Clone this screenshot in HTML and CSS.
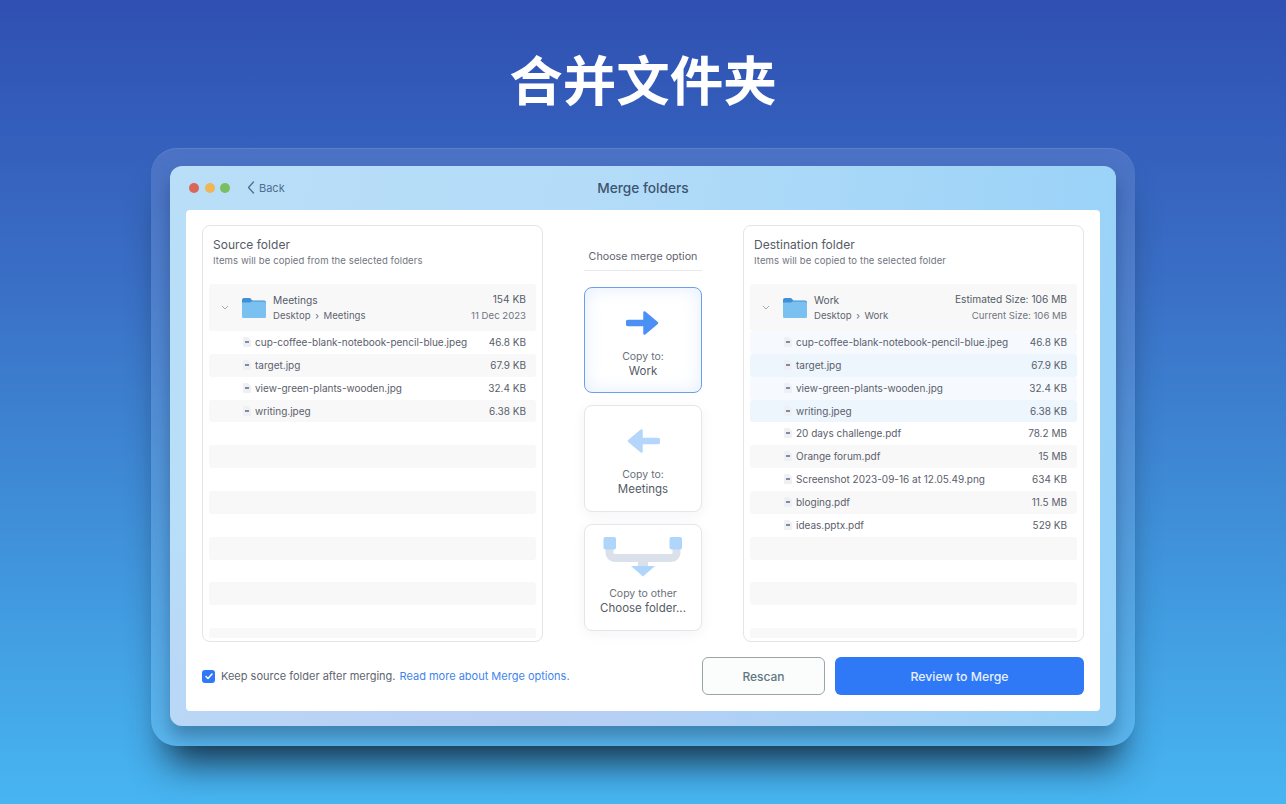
FILE: index.html
```html
<!DOCTYPE html>
<html lang="zh">
<head>
    <meta charset="UTF-8">
    <meta name="viewport" content="width=device-width, initial-scale=1.0">
    <title>合并文件夹</title>
    <link rel="stylesheet" href="styles.css">
</head>
<body>
    <svg class="defs" width="0" height="0">
        <symbol id="folder" viewBox="0 0 24 22">
            <path d="M0 3a2 2 0 0 1 2-2h6l2.500 2.500H22a2 2 0 0 1 2 2V8H0z" fill="#3f90d4"/>
            <path d="M0 5.500h8l1.500-1H22a2 2 0 0 1 2 2V19a2 2 0 0 1-2 2H2a2 2 0 0 1-2-2z" fill="#7ac0f0"/>
            <path d="M0 19.500V19a2 2 0 0 0 2 2h20a2 2 0 0 0 2-2v.5a1.500 1.500 0 0 1-1.500 1.500h-21A1.500 1.500 0 0 1 0 19.500z" fill="#4f9fd8"/>
        </symbol>
        <symbol id="file" viewBox="0 0 8 10">
            <path d="M0 1a1 1 0 0 1 1-1h4l3 3v6a1 1 0 0 1-1 1H1a1 1 0 0 1-1-1z" fill="#eef0f4"/>
            <rect x="2" y="4.200" width="4" height="1.600" fill="#6a7090"/>
        </symbol>
    </svg>

    <h1 class="headline">合并文件夹</h1>

    <div class="frame">
        <div class="window">
            <div class="titlebar">
                <div class="titlebar-left">
                    <div class="lights">
                        <span class="light red"></span>
                        <span class="light yellow"></span>
                        <span class="light green"></span>
                    </div>
                    <a class="back">
                        <svg width="8" height="13" viewBox="0 0 8 13"><path d="M6.500 1 1.500 6.500l5 5.500" fill="none" stroke="#4f6f92" stroke-width="1.300" stroke-linecap="round" stroke-linejoin="round"/></svg>
                        Back
                    </a>
                </div>
                <div class="window-title">Merge folders</div>
            </div>

            <div class="content">
                <div class="columns">
                    <section class="panel">
                        <h2>Source folder</h2>
                        <p class="panel-sub">Items will be copied from the selected folders</p>
                        <div class="list">
                            <div class="folder-row">
                                <svg class="chevron" width="8" height="5" viewBox="0 0 8 5"><path d="M1 1l3 3 3-3" fill="none" stroke="#a4a9b2" stroke-width="1"/></svg>
                                <svg class="folder-icon" width="24" height="22"><use href="#folder"/></svg>
                                <div class="folder-info">
                                    <div class="folder-name">Meetings</div>
                                    <div class="folder-path">Desktop <i>›</i> Meetings</div>
                                </div>
                                <div class="folder-meta">
                                    <div class="meta-main">154 KB</div>
                                    <div class="meta-sub">11 Dec 2023</div>
                                </div>
                            </div>
                            <div class="file-row"><svg width="8" height="10"><use href="#file"/></svg><span class="file-name">cup-coffee-blank-notebook-pencil-blue.jpeg</span><span class="file-size">46.8 KB</span></div>
                            <div class="file-row shade"><svg width="8" height="10"><use href="#file"/></svg><span class="file-name">target.jpg</span><span class="file-size">67.9 KB</span></div>
                            <div class="file-row"><svg width="8" height="10"><use href="#file"/></svg><span class="file-name">view-green-plants-wooden.jpg</span><span class="file-size">32.4 KB</span></div>
                            <div class="file-row shade"><svg width="8" height="10"><use href="#file"/></svg><span class="file-name">writing.jpeg</span><span class="file-size">6.38 KB</span></div>
                            <div class="file-row"></div>
                            <div class="file-row shade"></div>
                            <div class="file-row"></div>
                            <div class="file-row shade"></div>
                            <div class="file-row"></div>
                            <div class="file-row shade"></div>
                            <div class="file-row"></div>
                            <div class="file-row shade"></div>
                            <div class="file-row"></div>
                            <div class="file-row shade"></div>
                        </div>
                    </section>

                    <div class="options">
                        <div class="options-title">Choose merge option</div>
                        <div class="option selected">
                            <svg width="34" height="26" viewBox="0 0 34 26"><path d="M2.500 13h16" stroke="#4a90f5" stroke-width="6.500" stroke-linecap="round"/><path d="M18.500 2.500 31 13 18.500 23.500z" fill="#4a90f5" stroke="#4a90f5" stroke-width="2.500" stroke-linejoin="round"/></svg>
                            <div class="option-label">Copy to:</div>
                            <div class="option-name">Work</div>
                        </div>
                        <div class="option">
                            <svg width="34" height="26" viewBox="0 0 34 26"><path d="M31.500 13h-16" stroke="#b5d6fb" stroke-width="6.500" stroke-linecap="round"/><path d="M15.500 2.500 3 13l12.500 10.500z" fill="#b5d6fb" stroke="#b5d6fb" stroke-width="2.500" stroke-linejoin="round"/></svg>
                            <div class="option-label">Copy to:</div>
                            <div class="option-name">Meetings</div>
                        </div>
                        <div class="option other">
                            <svg width="80" height="40" viewBox="0 0 80 40"><path d="M6.500 12v4a5 5 0 0 0 5 5h57a5 5 0 0 0 5-5v-4" fill="none" stroke="#dbe1ea" stroke-width="8"/><path d="M40 25v5" stroke="#dbe1ea" stroke-width="10"/><rect x="0.500" y="0" width="12.500" height="12.500" rx="2" fill="#b0d5fb"/><rect x="66.500" y="0" width="12.500" height="12.500" rx="2" fill="#b0d5fb"/><path d="M28 29h24L40 39.500z" fill="#b0d5fb"/></svg>
                            <div class="option-label">Copy to other</div>
                            <div class="option-name">Choose folder...</div>
                        </div>
                    </div>

                    <section class="panel">
                        <h2>Destination folder</h2>
                        <p class="panel-sub">Items will be copied to the selected folder</p>
                        <div class="list">
                            <div class="folder-row">
                                <svg class="chevron" width="8" height="5" viewBox="0 0 8 5"><path d="M1 1l3 3 3-3" fill="none" stroke="#a4a9b2" stroke-width="1"/></svg>
                                <svg class="folder-icon" width="24" height="22"><use href="#folder"/></svg>
                                <div class="folder-info">
                                    <div class="folder-name">Work</div>
                                    <div class="folder-path">Desktop <i>›</i> Work</div>
                                </div>
                                <div class="folder-meta">
                                    <div class="meta-main">Estimated Size: 106 MB</div>
                                    <div class="meta-sub">Current Size: 106 MB</div>
                                </div>
                            </div>
                            <div class="file-row tint-1"><svg width="8" height="10"><use href="#file"/></svg><span class="file-name">cup-coffee-blank-notebook-pencil-blue.jpeg</span><span class="file-size">46.8 KB</span></div>
                            <div class="file-row tint-2"><svg width="8" height="10"><use href="#file"/></svg><span class="file-name">target.jpg</span><span class="file-size">67.9 KB</span></div>
                            <div class="file-row tint-1"><svg width="8" height="10"><use href="#file"/></svg><span class="file-name">view-green-plants-wooden.jpg</span><span class="file-size">32.4 KB</span></div>
                            <div class="file-row tint-2"><svg width="8" height="10"><use href="#file"/></svg><span class="file-name">writing.jpeg</span><span class="file-size">6.38 KB</span></div>
                            <div class="file-row"><svg width="8" height="10"><use href="#file"/></svg><span class="file-name">20 days challenge.pdf</span><span class="file-size">78.2 MB</span></div>
                            <div class="file-row shade"><svg width="8" height="10"><use href="#file"/></svg><span class="file-name">Orange forum.pdf</span><span class="file-size">15 MB</span></div>
                            <div class="file-row"><svg width="8" height="10"><use href="#file"/></svg><span class="file-name">Screenshot 2023-09-16 at 12.05.49.png</span><span class="file-size">634 KB</span></div>
                            <div class="file-row shade"><svg width="8" height="10"><use href="#file"/></svg><span class="file-name">bloging.pdf</span><span class="file-size">11.5 MB</span></div>
                            <div class="file-row"><svg width="8" height="10"><use href="#file"/></svg><span class="file-name">ideas.pptx.pdf</span><span class="file-size">529 KB</span></div>
                            <div class="file-row shade"></div>
                            <div class="file-row"></div>
                            <div class="file-row shade"></div>
                            <div class="file-row"></div>
                            <div class="file-row shade"></div>
                        </div>
                    </section>
                </div>

                <div class="footer">
                    <label class="keep">
                        <span class="checkbox"><svg width="8" height="7" viewBox="0 0 8 7"><path d="M1 3.500 3 5.500 7 1" fill="none" stroke="#fff" stroke-width="1.500" stroke-linecap="round" stroke-linejoin="round"/></svg></span>
                        Keep source folder after merging.
                        <a class="more">Read more about Merge options.</a>
                    </label>
                    <button class="btn-rescan">Rescan</button>
                    <button class="btn-review">Review to Merge</button>
                </div>
            </div>
        </div>
    </div>
</body>
</html>
```

FILE: styles.css
```css
* {
    margin: 0;
    padding: 0;
    box-sizing: border-box;
    font-family: Inter, "Noto Sans CJK SC", sans-serif;
}

body {
    width: 1286px;
    height: 804px;
    overflow: hidden;
    background: linear-gradient(180deg, #2f50b2 0%, #3a6fc6 35%, #3f8fd8 65%, #47b5f1 100%);
}

.defs {
    position: absolute;
}

.headline {
    height: 148px;
    padding-top: 44px;
    text-align: center;
    color: white;
    font-size: 53.500px;
    line-height: 68px;
    font-weight: 700;
    font-family: "Noto Sans CJK SC", sans-serif;
}

.frame {
    width: 984px;
    height: 598px;
    margin-left: 151px;
    padding: 18px 19px;
    border-radius: 26px;
    background: rgba(255, 255, 255, 0.11);
    box-shadow: 0 32px 36px -16px rgba(20, 45, 65, 0.95), inset 0 1px 0 rgba(255, 255, 255, 0.1);
}

.window {
    height: 560px;
    padding: 0 16px 15px;
    border-radius: 12px;
    background:
        radial-gradient(600px 220px at 36% 100%, rgba(190, 195, 240, 0.55), transparent),
        linear-gradient(100deg, #b9def8 0%, #b4dcf8 40%, #97d1f8 100%);
    box-shadow: 0 12px 18px rgba(10, 40, 70, 0.35);
}

.titlebar {
    height: 44px;
    display: grid;
    grid-template-columns: 1fr auto 1fr;
    align-items: center;
}

.titlebar-left {
    display: flex;
    align-items: center;
    padding-left: 3px;
}

.lights {
    display: flex;
    gap: 5.500px;
    margin-right: 17px;
}

.light {
    width: 10px;
    height: 10px;
    border-radius: 50%;
}

.red { background: #da665a; }
.yellow { background: #eeb654; }
.green { background: #7abf5f; }

.back {
    display: flex;
    align-items: center;
    gap: 4px;
    margin-top: -1px;
    font-size: 11px;
    color: #4f6f92;
}

.window-title {
    font-size: 13.700px;
    font-weight: 500;
    color: #3d5570;
}

.content {
    height: 501px;
    padding: 15px 16px;
    background: white;
    border-radius: 4px;
}

.columns {
    display: grid;
    grid-template-columns: 341px 1fr 341px;
    height: 417px;
}

.panel {
    padding: 12px 6px 4px;
    border: 1px solid #e2e4e8;
    border-radius: 8px;
    overflow: hidden;
}

.panel h2 {
    padding-left: 4px;
    font-size: 12px;
    line-height: 13px;
    font-weight: 400;
    letter-spacing: 0.03px;
    color: #555b66;
}

.panel-sub {
    padding-left: 4px;
    margin-top: 3px;
    font-size: 9.500px;
    line-height: 13px;
    letter-spacing: 0.11px;
    color: #70757f;
}

.list {
    margin-top: 17px;
    height: 354px;
    overflow: hidden;
}

.folder-row {
    height: 47px;
    display: flex;
    align-items: center;
    padding-right: 10px;
    background: #f8f8f9;
    border-radius: 3px;
}

.chevron {
    margin-left: 12px;
}

.folder-icon {
    margin-left: 13px;
    margin-right: 7px;
}

.folder-info {
    flex: 1;
}

.folder-name {
    font-size: 10.200px;
    line-height: 15px;
    color: #555b66;
}

.folder-path {
    font-size: 9.600px;
    line-height: 15px;
    color: #5f6570;
}

.folder-path i {
    font-style: normal;
    margin: 0 2px;
}

.folder-meta {
    text-align: right;
}

.meta-main {
    font-size: 10.200px;
    line-height: 15px;
    color: #555b66;
}

.meta-sub {
    font-size: 9.600px;
    line-height: 17px;
    color: #70757f;
}

.file-row {
    height: 22.860px;
    display: flex;
    align-items: center;
    padding: 0 10px 1px 34px;
    font-size: 10px;
    color: #5a606b;
    border-radius: 3px;
}

.file-row.shade { background: #f8f8f9; }
.file-row.tint-1 { background: #f6fafe; }
.file-row.tint-2 { background: #edf5fd; }

.file-name {
    flex: 1;
    margin-left: 4px;
}

.options {
    padding: 0 41px;
    display: flex;
    flex-direction: column;
}

.options-title {
    margin-top: 23px;
    padding-bottom: 6px;
    height: 23px;
    line-height: 17px;
    text-align: center;
    font-size: 10.700px;
    color: #5f6570;
    white-space: nowrap;
    border-bottom: 1px solid #e8e9ec;
}

.option {
    height: 107px;
    margin-top: 12px;
    padding-top: 22px;
    display: flex;
    flex-direction: column;
    align-items: center;
    border: 1px solid #e4e6ea;
    border-radius: 8px;
    background: white;
    box-shadow: 0 3px 14px rgba(20, 40, 80, 0.05);
}

.options-title + .option {
    margin-top: 16px;
    height: 106px;
}

.option.selected {
    border-color: #6d9eea;
    box-shadow: inset 0 0 18px rgba(80, 150, 240, 0.16);
}

.option.other {
    padding-top: 12px;
}

.option.other .option-label {
    margin-top: 9px;
}

.option-label {
    margin-top: 13px;
    font-size: 10.500px;
    line-height: 15px;
    color: #6a707a;
}

.option-name {
    font-size: 11.500px;
    line-height: 15px;
    color: #555b66;
}

.footer {
    display: flex;
    align-items: center;
    height: 38px;
    margin-top: 15px;
}

.keep {
    flex: 1;
    display: flex;
    align-items: center;
    gap: 4px;
    font-size: 11px;
    color: #5f6570;
}

.checkbox {
    width: 13px;
    height: 13px;
    margin-right: 2px;
    display: flex;
    align-items: center;
    justify-content: center;
    border-radius: 3px;
    background: #2f78f6;
}

.more {
    color: #3f85ea;
}

.btn-rescan {
    width: 123px;
    height: 38px;
    margin-right: 10px;
    border: 1px solid #99a5a8;
    border-radius: 6px;
    background: #fbfcfc;
    color: #5f7880;
    font-size: 12px;
    font-weight: 500;
}

.btn-review {
    width: 249px;
    height: 38px;
    border: none;
    border-radius: 6px;
    background: #2f78f6;
    color: #e6f0ff;
    font-size: 12.300px;
    font-weight: 500;
}
```
